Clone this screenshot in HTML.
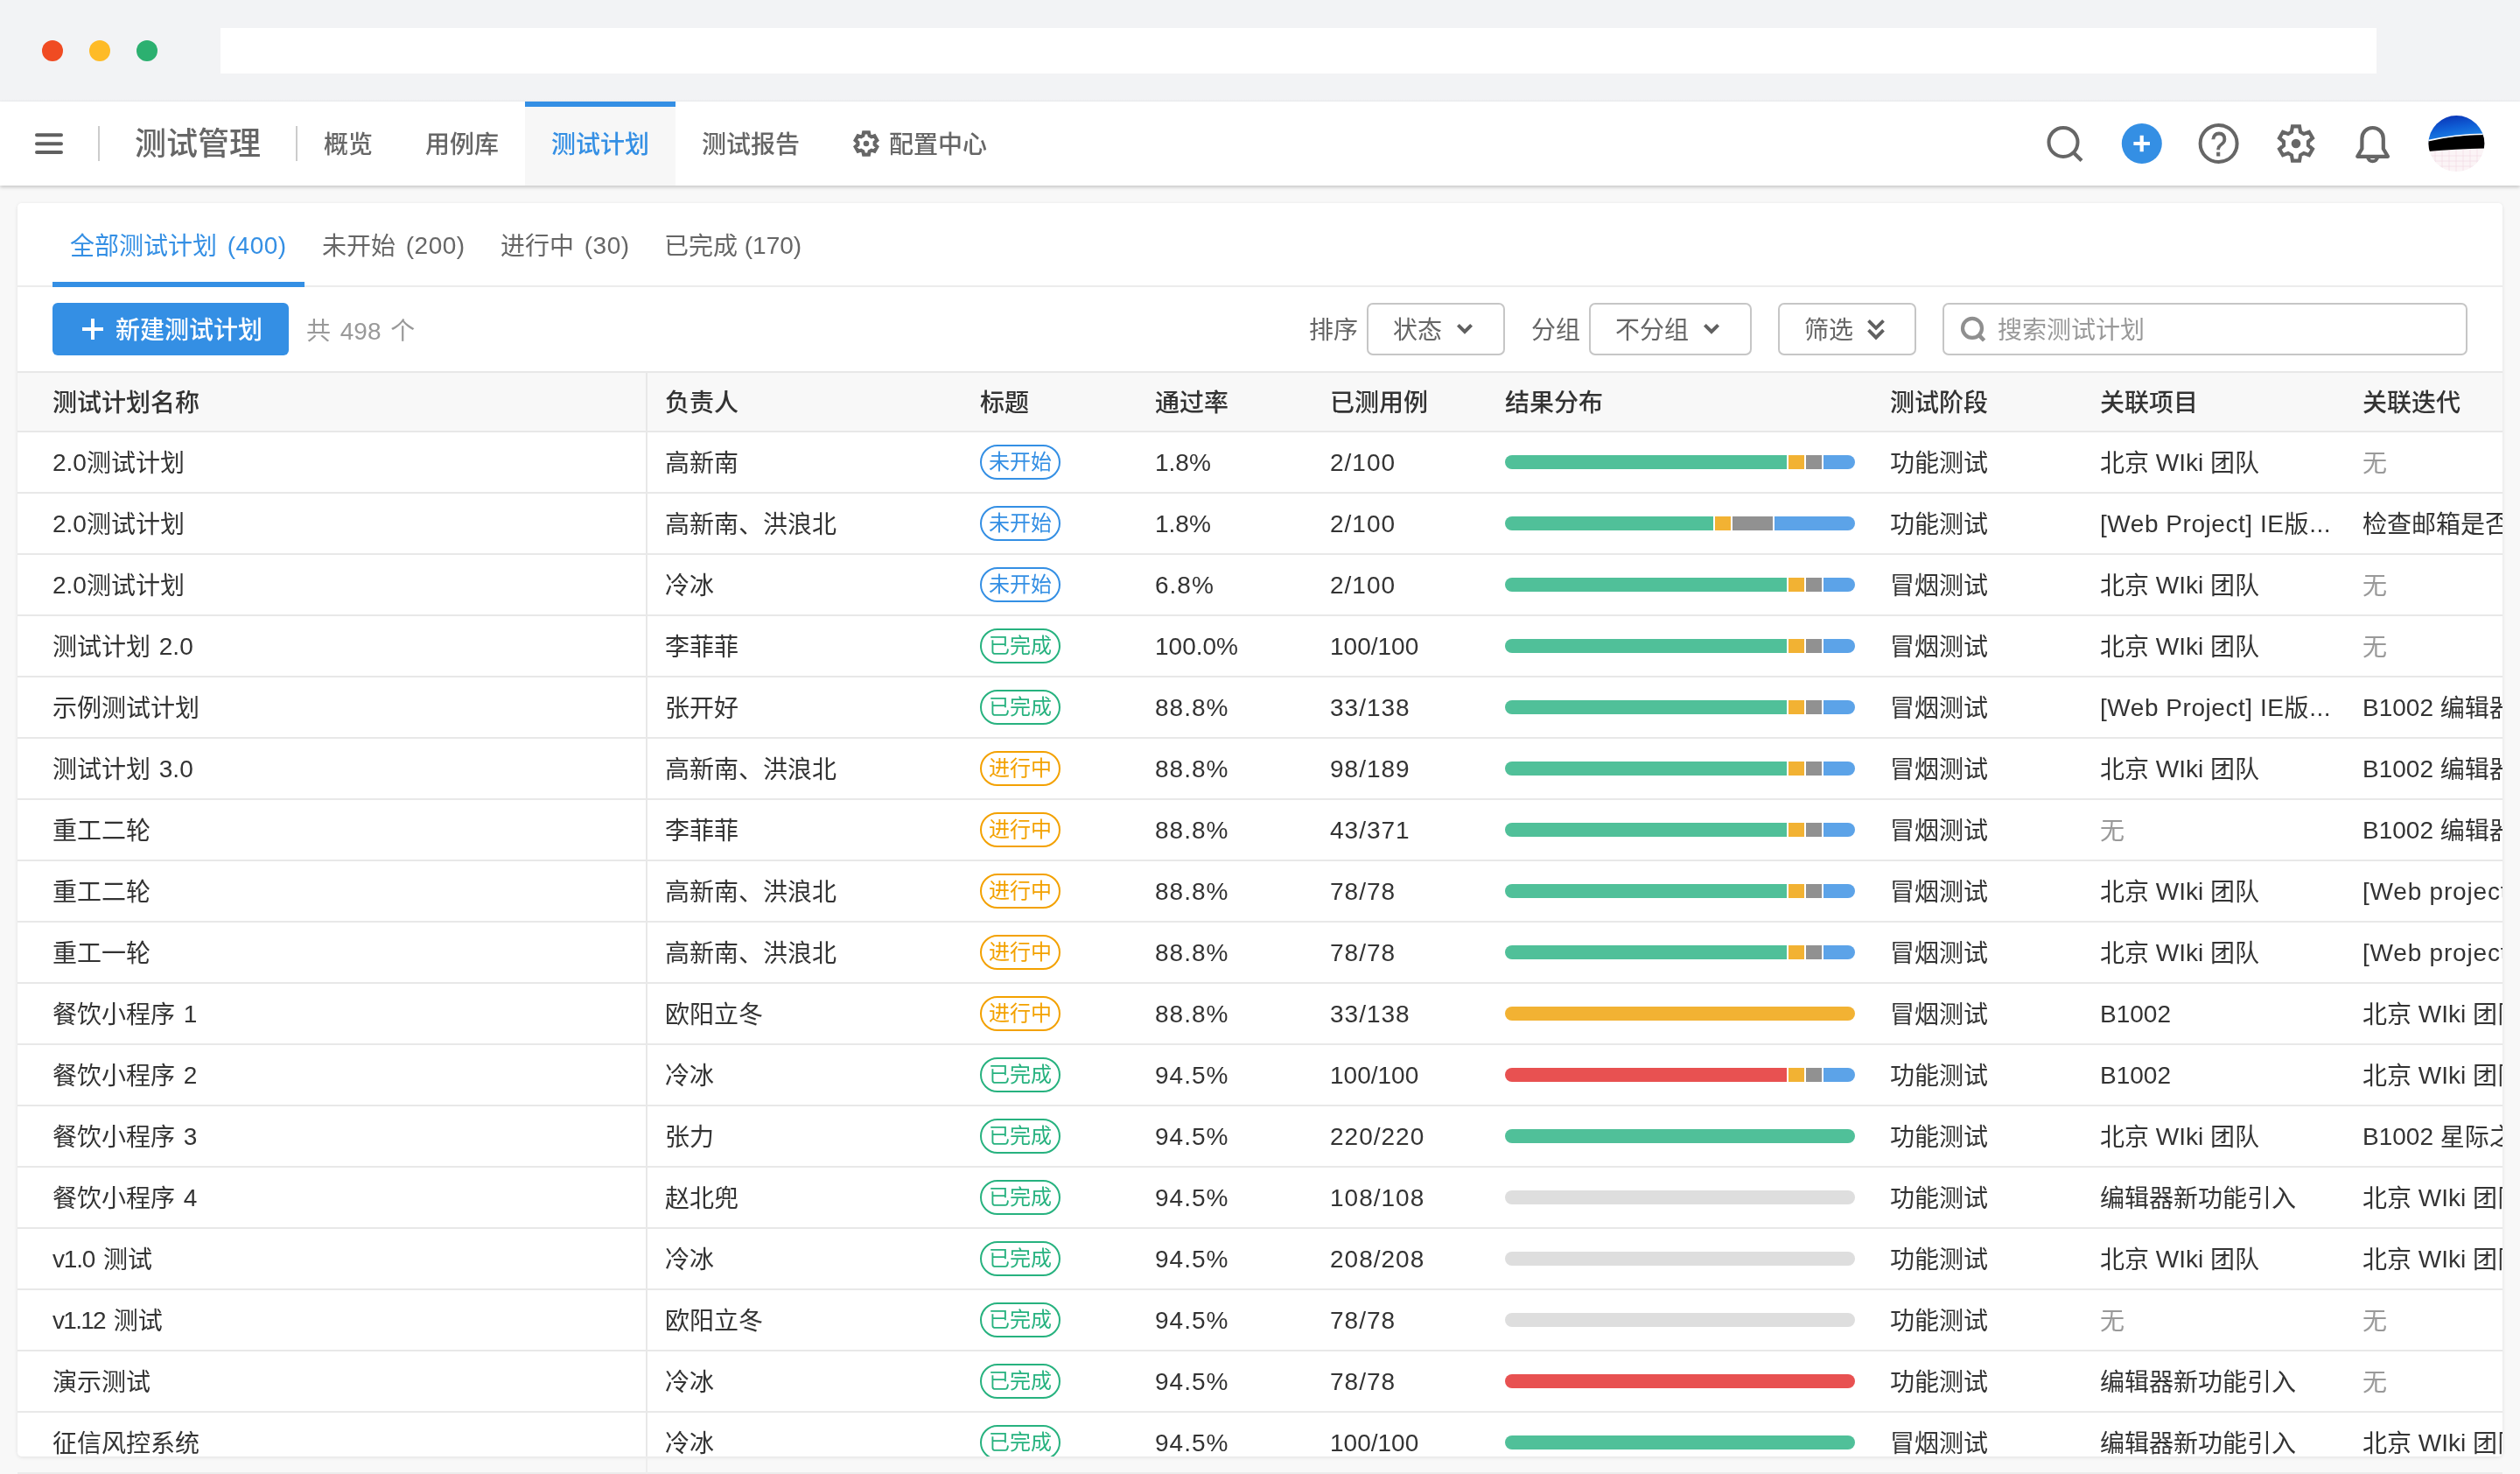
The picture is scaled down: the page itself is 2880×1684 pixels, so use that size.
<!DOCTYPE html>
<html lang="zh-CN">
<head>
<meta charset="utf-8">
<title>测试管理 - 测试计划</title>
<style>
*{box-sizing:border-box}
html,body{margin:0;padding:0}
body{-webkit-font-smoothing:antialiased;width:2880px;height:1684px;overflow:hidden;position:relative;background:#f8f8f8;
 font-family:"Liberation Sans","Noto Sans CJK SC",sans-serif;color:#333;font-size:28px;line-height:40px}
.abs{position:absolute}
/* browser chrome */
#chrome{position:absolute;left:0;top:0;width:2880px;height:116px;background:linear-gradient(#f2f3f5,#f2f3f5 114px,#eff0f2 115px,#eff0f2)}
#chrome .dot{position:absolute;top:46px;width:24px;height:24px;border-radius:50%}
#chrome .url{position:absolute;left:252px;top:32px;width:2464px;height:52px;background:#fff}
/* navbar */
#nav{position:absolute;left:0;top:116px;width:2880px;height:96px;background:#fff;box-shadow:0 2px 4px rgba(0,0,0,.2);color:#666}
#nav .sep{position:absolute;top:28px;width:2px;height:40px;background:#ccc}
#nav .title{font-weight:500;position:absolute;left:154px;top:0;height:96px;line-height:98px;font-size:36px;color:#666;white-space:nowrap}
#nav .tabs{position:absolute;left:340px;top:0;height:96px;display:flex}
#nav .tab{font-weight:500;height:96px;padding:0 30px;line-height:100px;font-size:28px;white-space:nowrap;position:relative;color:#666}
#nav .tab.on{background:#f7f7f7;color:#348fe4;border-top:6px solid #348fe4;line-height:88px}
#nav .tab svg{position:absolute;left:30px;top:33px}
#nav .tab.cfg{padding-left:72px}
#nav svg.ic{position:absolute}
/* card */
#card{position:absolute;left:20px;top:232px;width:2840px;height:1432px;background:#fff;border-radius:5px;overflow:hidden}
#cardsh{position:absolute;left:20px;top:232px;width:2840px;height:1432px;border-radius:5px;box-shadow:0 1px 4px rgba(0,0,0,.1)}
#ptabs{position:absolute;left:0;top:0;width:2840px;height:96px;border-bottom:2px solid #ececec}
#ptabs .pt{position:absolute;top:0;height:96px;line-height:100px;padding:0 20px;font-size:28px;color:#666;white-space:nowrap;word-spacing:4px}
#ptabs .pt b{font-weight:normal;letter-spacing:.5px;position:relative;top:-1px}
#ptabs .pt.on{color:#348fe4}
#ptabs .pt.on:after{content:"";position:absolute;left:0;right:0;bottom:0;height:6px;background:#348fe4}
#tool{position:absolute;left:0;top:96px;width:2840px;height:96px}
#newbtn{position:absolute;left:40px;top:18px;width:270px;height:60px;border-radius:6px;background:#348fe4;color:#fff;font-size:28px;font-weight:500;line-height:64px;padding-left:72px;white-space:nowrap}
#newbtn svg{position:absolute;left:34px;top:18px}
#total{position:absolute;left:330px;top:18px;line-height:66px;word-spacing:3px;color:#999;white-space:nowrap;font-size:28px}
.lbl{position:absolute;top:18px;line-height:64px;color:#666;white-space:nowrap}
.sel{position:absolute;top:18px;height:60px;border:2px solid #c6c6c6;border-radius:7px;line-height:60px;color:#666;padding-left:28px;white-space:nowrap;background:#fff}
.sel svg{position:absolute}
#search{position:absolute;left:2200px;top:18px;width:600px;height:60px;border:2px solid #c6c6c6;border-radius:7px;line-height:60px;color:#999;padding-left:61px;white-space:nowrap}
#search svg{position:absolute;left:16px;top:12px}
/* table */
#tbl{position:absolute;left:0;top:192px;width:2840px}
.th,.tr{display:flex;width:2840px;height:70px}
.th{border-top:2px solid #e8e8e8;border-bottom:2px solid #e8e8e8;background:#f8f8f8;font-weight:500;color:#333}
.tr{border-bottom:2px solid #e8e8e8}
  .td{height:68px;line-height:72px;white-space:nowrap;overflow:hidden;padding-left:20px;flex:none}
.th .td{height:66px;line-height:70px}
.c1{width:720px;padding-left:40px;border-right:2px solid #e8e8e8}
.c2{width:360px}.c3{width:200px}.c4{width:200px}.c5{width:200px}.c6{width:440px}.c7{width:240px}.c8{width:300px}.c9{width:180px}
.nil{color:#999}
.l{position:relative;top:-1px}
.tr .c1{word-spacing:2px}
.tr .c4,.tr .c5{line-height:69px}
.ls{letter-spacing:1px}
.tag{display:inline-block;vertical-align:top;margin-top:14px;width:92px;height:40px;border:2px solid;border-radius:20px;font-size:24px;line-height:36px;text-align:center}
.tb{color:#348fe4;border-color:#348fe4}
.tg{color:#27b27f;border-color:#27b27f}
.to{color:#f3a100;border-color:#f3a100}
.bar{position:relative;width:400px;height:16px;margin-top:26px;border-radius:8px;overflow:hidden;background:#fff}
.bar i{position:absolute;top:0;height:16px;display:block}
.sg{background:#50c099}.sy{background:#f2b233}.sn{background:#919191}.sb{background:#5ca3e8}.sr{background:#e85151}.se{background:#dedede}
#foot{position:absolute;left:20px;top:1682px;width:2840px;height:2px;background:#ebebeb}
#footv{position:absolute;left:738px;top:1664px;width:2px;height:20px;background:#ededed}
#card,#nav,#chrome{will-change:transform}
</style>
</head>
<body>
<div id="chrome">
 <div class="dot" style="left:48px;background:#f04b22"></div>
 <div class="dot" style="left:102px;background:#febb27"></div>
 <div class="dot" style="left:156px;background:#2cb070"></div>
 <div class="url"></div>
</div>

<div id="nav">
 <svg class="ic" style="left:36px;top:32px" width="40" height="32" viewBox="0 0 40 32"><path d="M6 6.3H34M6 16.2H34M6 26H34" stroke="#606060" stroke-width="4" stroke-linecap="round" fill="none"/></svg>
 <div class="sep" style="left:112px"></div>
 <div class="title">测试管理</div>
 <div class="sep" style="left:338px"></div>
 <div class="tabs">
  <div class="tab">概览</div>
  <div class="tab">用例库</div>
  <div class="tab on">测试计划</div>
  <div class="tab">测试报告</div>
  <div class="tab cfg"><svg style="left:30.6px" width="30" height="30" viewBox="0 0 30 30"><path d="M11.37 6.01 L12.09 2.38 L17.91 2.38 L18.63 6.01 L20.97 7.36 L24.47 6.17 L27.38 11.21 L24.61 13.65 L24.61 16.35 L27.38 18.79 L24.47 23.83 L20.97 22.64 L18.63 23.99 L17.91 27.62 L12.09 27.62 L11.37 23.99 L9.03 22.64 L5.53 23.83 L2.62 18.79 L5.39 16.35 L5.39 13.65 L2.62 11.21 L5.53 6.17 L9.03 7.36Z" fill="none" stroke="#666" stroke-width="4.1" stroke-linejoin="miter"/><circle cx="15" cy="15" r="3.3" fill="#666"/></svg>配置中心</div>
 </div>
 <!-- right icons: nav top = 116 -->
 <svg class="ic" style="left:2332px;top:20px" width="56" height="56" viewBox="0 0 56 56"><circle cx="26" cy="26.4" r="16.5" fill="none" stroke="#666" stroke-width="4"/><path d="M37.6 38.2L47 47.6" stroke="#666" stroke-width="4.2" fill="none"/></svg>
 <svg class="ic" style="left:2424px;top:24px" width="48" height="48" viewBox="0 0 48 48"><circle cx="23.8" cy="24" r="23" fill="#348fe4"/><path d="M14.4 24H33M23.7 14.8V33.2" stroke="#fff" stroke-width="4.2" fill="none"/></svg>
 <svg class="ic" style="left:2512px;top:24px" width="48" height="48" viewBox="0 0 48 48"><circle cx="23.6" cy="24" r="21" fill="none" stroke="#666" stroke-width="4"/><text x="0" y="38.5" transform="translate(23.7 0) scale(.88 1)" text-anchor="middle" font-family="Liberation Sans, sans-serif" font-size="38" fill="#666" stroke="#666" stroke-width="0.9">?</text></svg>
 <svg class="ic" style="left:2601.6px;top:26px" width="44" height="44" viewBox="0 0 44 44"><path d="M16.91 8.74 L18.01 2.40 L25.99 2.40 L27.09 8.74 L30.94 10.96 L36.98 8.75 L40.97 15.65 L36.03 19.78 L36.03 24.22 L40.97 28.35 L36.98 35.25 L30.94 33.04 L27.09 35.26 L25.99 41.60 L18.01 41.60 L16.91 35.26 L13.06 33.04 L7.02 35.25 L3.03 28.35 L7.97 24.22 L7.97 19.78 L3.03 15.65 L7.02 8.75 L13.06 10.96Z" fill="none" stroke="#666" stroke-width="4.2" stroke-linejoin="miter"/><circle cx="22" cy="22" r="5.3" fill="#666"/></svg>
 <svg class="ic" style="left:2688px;top:24px" width="48" height="48" viewBox="0 0 48 48"><path d="M6.2 38.8H41L35.8 30V18.2A12.2 12.2 0 0 0 11.4 18.2V30Z" fill="none" stroke="#666" stroke-width="4.2" stroke-linejoin="round"/><path d="M17.9 39.5A5.8 5.8 0 0 0 29.3 39.5" fill="none" stroke="#666" stroke-width="4"/></svg>
 <svg class="ic" style="left:2775px;top:15.6px" width="65" height="65" viewBox="0 0 65 65">
  <defs><clipPath id="av"><circle cx="32.4" cy="32.1" r="32"/></clipPath>
  <linearGradient id="sky" x1="0" y1="0" x2="0.35" y2="1"><stop offset="0" stop-color="#0a2cb0"/><stop offset="0.55" stop-color="#0f5fd6"/><stop offset="1" stop-color="#1f86e6"/></linearGradient></defs>
  <g clip-path="url(#av)">
   <rect x="0" y="0" width="65" height="65" fill="#fbf4f6"/>
   <path d="M0 0H65V22Q30 22 0 30Z" fill="url(#sky)"/>
   <path d="M0 29Q30 22 65 21.5V37.5Q30 38 0 41Z" fill="#000"/>
   <path d="M0 28.6Q30 21.6 65 21.2" stroke="#fff" stroke-width="1.6" fill="none"/>
   <path d="M8 41V65M16 40V65M24 39.5V65M32 39V65M40 38.6V65M48 38.3V65M56 38V65M0 46H65M0 52H65M0 58H65" stroke="#ecd3df" stroke-width="0.5" fill="none"/>
  </g>
 </svg>
</div>

<div id="cardsh"></div>
<div id="card">
 <div id="ptabs">
  <div class="pt on" style="left:40px;width:288px">全部测试计划 <b>(400)</b></div>
  <div class="pt" style="left:328px">未开始 <b>(200)</b></div>
  <div class="pt" style="left:532px">进行中 <b>(30)</b></div>
  <div class="pt" style="left:719px;word-spacing:0"><span>已完成 </span><b style="letter-spacing:0">(170)</b></div>
 </div>
 <div id="tool">
  <div id="newbtn"><svg width="24" height="24" viewBox="0 0 24 24"><path d="M0 12H24M12 0V24" stroke="#fff" stroke-width="4" fill="none"/></svg>新建测试计划</div>
  <div id="total">共 498 个</div>
  <div class="lbl" style="left:1476px">排序</div>
  <div class="sel" style="left:1542px;width:158px">状态<svg style="left:98px;top:20px" width="24" height="18" viewBox="0 0 24 18"><path d="M4.4 3.4L12 11L19.6 3.4" stroke="#606060" stroke-width="4" fill="none"/></svg></div>
  <div class="lbl" style="left:1730px">分组</div>
  <div class="sel" style="left:1796px;width:186px">不分组<svg style="left:125.6px;top:20px" width="24" height="18" viewBox="0 0 24 18"><path d="M4.4 3.4L12 11L19.6 3.4" stroke="#606060" stroke-width="4" fill="none"/></svg></div>
  <div class="sel" style="left:2012px;width:158px">筛选<svg style="left:96px;top:14px" width="28" height="30" viewBox="0 0 28 30"><path d="M5.5 4.4L14 12.9L22.5 4.4M5.5 15.2L14 23.7L22.5 15.2" stroke="#606060" stroke-width="3.8" fill="none"/></svg></div>
  <div id="search"><svg width="36" height="36" viewBox="0 0 36 36"><circle cx="16" cy="14.9" r="11" fill="none" stroke="#8f8f8f" stroke-width="4.2"/><path d="M23.4 22.6L29.6 29" stroke="#8f8f8f" stroke-width="4.6" fill="none"/></svg>搜索测试计划</div>
 </div>
 <div id="tbl">
  <div class="th"><div class="td c1">测试计划名称</div><div class="td c2">负责人</div><div class="td c3">标题</div><div class="td c4">通过率</div><div class="td c5">已测用例</div><div class="td c6">结果分布</div><div class="td c7">测试阶段</div><div class="td c8">关联项目</div><div class="td c9">关联迭代</div></div>
<div class="tr"><div class="td c1"><span class="l">2.0</span>测试计划</div><div class="td c2">高新南</div><div class="td c3"><span class="tag tb">未开始</span></div><div class="td c4">1.8%</div><div class="td c5"><span class="ls">2/100</span></div><div class="td c6"><div class="bar"><i class="sg" style="left:0px;width:322px"></i><i class="sy" style="left:324px;width:18px"></i><i class="sn" style="left:344px;width:18px"></i><i class="sb" style="left:364px;width:36px"></i></div></div><div class="td c7">功能测试</div><div class="td c8">北京 <span class="l">WIki</span> 团队</div><div class="td c9"><span class="nil">无</span></div></div>
<div class="tr"><div class="td c1"><span class="l">2.0</span>测试计划</div><div class="td c2">高新南、洪浪北</div><div class="td c3"><span class="tag tb">未开始</span></div><div class="td c4">1.8%</div><div class="td c5"><span class="ls">2/100</span></div><div class="td c6"><div class="bar"><i class="sg" style="left:0px;width:238px"></i><i class="sy" style="left:240px;width:18px"></i><i class="sn" style="left:260px;width:46px"></i><i class="sb" style="left:308px;width:92px"></i></div></div><div class="td c7">功能测试</div><div class="td c8"><span style="letter-spacing:.55px"><span class="l">[Web Project] IE</span>版<span class="l">...</span></span></div><div class="td c9">检查邮箱是否正常收发</div></div>
<div class="tr"><div class="td c1"><span class="l">2.0</span>测试计划</div><div class="td c2">冷冰</div><div class="td c3"><span class="tag tb">未开始</span></div><div class="td c4"><span class="ls">6.8%</span></div><div class="td c5"><span class="ls">2/100</span></div><div class="td c6"><div class="bar"><i class="sg" style="left:0px;width:322px"></i><i class="sy" style="left:324px;width:18px"></i><i class="sn" style="left:344px;width:18px"></i><i class="sb" style="left:364px;width:36px"></i></div></div><div class="td c7">冒烟测试</div><div class="td c8">北京 <span class="l">WIki</span> 团队</div><div class="td c9"><span class="nil">无</span></div></div>
<div class="tr"><div class="td c1">测试计划 <span class="l">2.0</span></div><div class="td c2">李菲菲</div><div class="td c3"><span class="tag tg">已完成</span></div><div class="td c4">100.0%</div><div class="td c5">100/100</div><div class="td c6"><div class="bar"><i class="sg" style="left:0px;width:322px"></i><i class="sy" style="left:324px;width:18px"></i><i class="sn" style="left:344px;width:18px"></i><i class="sb" style="left:364px;width:36px"></i></div></div><div class="td c7">冒烟测试</div><div class="td c8">北京 <span class="l">WIki</span> 团队</div><div class="td c9"><span class="nil">无</span></div></div>
<div class="tr"><div class="td c1">示例测试计划</div><div class="td c2">张开好</div><div class="td c3"><span class="tag tg">已完成</span></div><div class="td c4"><span class="ls">88.8%</span></div><div class="td c5"><span class="ls">33/138</span></div><div class="td c6"><div class="bar"><i class="sg" style="left:0px;width:322px"></i><i class="sy" style="left:324px;width:18px"></i><i class="sn" style="left:344px;width:18px"></i><i class="sb" style="left:364px;width:36px"></i></div></div><div class="td c7">冒烟测试</div><div class="td c8"><span style="letter-spacing:.55px"><span class="l">[Web Project] IE</span>版<span class="l">...</span></span></div><div class="td c9"><span class="l">B1002</span> 编辑器新功能</div></div>
<div class="tr"><div class="td c1">测试计划 <span class="l">3.0</span></div><div class="td c2">高新南、洪浪北</div><div class="td c3"><span class="tag to">进行中</span></div><div class="td c4"><span class="ls">88.8%</span></div><div class="td c5"><span class="ls">98/189</span></div><div class="td c6"><div class="bar"><i class="sg" style="left:0px;width:322px"></i><i class="sy" style="left:324px;width:18px"></i><i class="sn" style="left:344px;width:18px"></i><i class="sb" style="left:364px;width:36px"></i></div></div><div class="td c7">冒烟测试</div><div class="td c8">北京 <span class="l">WIki</span> 团队</div><div class="td c9"><span class="l">B1002</span> 编辑器新功能</div></div>
<div class="tr"><div class="td c1">重工二轮</div><div class="td c2">李菲菲</div><div class="td c3"><span class="tag to">进行中</span></div><div class="td c4"><span class="ls">88.8%</span></div><div class="td c5"><span class="ls">43/371</span></div><div class="td c6"><div class="bar"><i class="sg" style="left:0px;width:322px"></i><i class="sy" style="left:324px;width:18px"></i><i class="sn" style="left:344px;width:18px"></i><i class="sb" style="left:364px;width:36px"></i></div></div><div class="td c7">冒烟测试</div><div class="td c8"><span class="nil">无</span></div><div class="td c9"><span class="l">B1002</span> 编辑器新功能</div></div>
<div class="tr"><div class="td c1">重工二轮</div><div class="td c2">高新南、洪浪北</div><div class="td c3"><span class="tag to">进行中</span></div><div class="td c4"><span class="ls">88.8%</span></div><div class="td c5"><span class="ls">78/78</span></div><div class="td c6"><div class="bar"><i class="sg" style="left:0px;width:322px"></i><i class="sy" style="left:324px;width:18px"></i><i class="sn" style="left:344px;width:18px"></i><i class="sb" style="left:364px;width:36px"></i></div></div><div class="td c7">冒烟测试</div><div class="td c8">北京 <span class="l">WIki</span> 团队</div><div class="td c9"><span style="letter-spacing:.8px"><span class="l">[Web project]</span> 迭代</span></div></div>
<div class="tr"><div class="td c1">重工一轮</div><div class="td c2">高新南、洪浪北</div><div class="td c3"><span class="tag to">进行中</span></div><div class="td c4"><span class="ls">88.8%</span></div><div class="td c5"><span class="ls">78/78</span></div><div class="td c6"><div class="bar"><i class="sg" style="left:0px;width:322px"></i><i class="sy" style="left:324px;width:18px"></i><i class="sn" style="left:344px;width:18px"></i><i class="sb" style="left:364px;width:36px"></i></div></div><div class="td c7">冒烟测试</div><div class="td c8">北京 <span class="l">WIki</span> 团队</div><div class="td c9"><span style="letter-spacing:.8px"><span class="l">[Web project]</span> 迭代</span></div></div>
<div class="tr"><div class="td c1">餐饮小程序 <span class="l">1</span></div><div class="td c2">欧阳立冬</div><div class="td c3"><span class="tag to">进行中</span></div><div class="td c4"><span class="ls">88.8%</span></div><div class="td c5"><span class="ls">33/138</span></div><div class="td c6"><div class="bar"><i class="sy" style="left:0px;width:400px"></i></div></div><div class="td c7">冒烟测试</div><div class="td c8"><span class="l">B1002</span></div><div class="td c9">北京 <span class="l">WIki</span> 团队</div></div>
<div class="tr"><div class="td c1">餐饮小程序 <span class="l">2</span></div><div class="td c2">冷冰</div><div class="td c3"><span class="tag tg">已完成</span></div><div class="td c4"><span class="ls">94.5%</span></div><div class="td c5">100/100</div><div class="td c6"><div class="bar"><i class="sr" style="left:0px;width:322px"></i><i class="sy" style="left:324px;width:18px"></i><i class="sn" style="left:344px;width:18px"></i><i class="sb" style="left:364px;width:36px"></i></div></div><div class="td c7">功能测试</div><div class="td c8"><span class="l">B1002</span></div><div class="td c9">北京 <span class="l">WIki</span> 团队</div></div>
<div class="tr"><div class="td c1">餐饮小程序 <span class="l">3</span></div><div class="td c2">张力</div><div class="td c3"><span class="tag tg">已完成</span></div><div class="td c4"><span class="ls">94.5%</span></div><div class="td c5"><span class="ls">220/220</span></div><div class="td c6"><div class="bar"><i class="sg" style="left:0px;width:400px"></i></div></div><div class="td c7">功能测试</div><div class="td c8">北京 <span class="l">WIki</span> 团队</div><div class="td c9"><span class="l">B1002</span> 星际之门</div></div>
<div class="tr"><div class="td c1">餐饮小程序 <span class="l">4</span></div><div class="td c2">赵北兜</div><div class="td c3"><span class="tag tg">已完成</span></div><div class="td c4"><span class="ls">94.5%</span></div><div class="td c5"><span class="ls">108/108</span></div><div class="td c6"><div class="bar"><i class="se" style="left:0px;width:400px"></i></div></div><div class="td c7">功能测试</div><div class="td c8">编辑器新功能引入</div><div class="td c9">北京 <span class="l">WIki</span> 团队</div></div>
<div class="tr"><div class="td c1"><span style="letter-spacing:-1.2px"><span class="l">v1.0</span></span> 测试</div><div class="td c2">冷冰</div><div class="td c3"><span class="tag tg">已完成</span></div><div class="td c4"><span class="ls">94.5%</span></div><div class="td c5"><span class="ls">208/208</span></div><div class="td c6"><div class="bar"><i class="se" style="left:0px;width:400px"></i></div></div><div class="td c7">功能测试</div><div class="td c8">北京 <span class="l">WIki</span> 团队</div><div class="td c9">北京 <span class="l">WIki</span> 团队</div></div>
<div class="tr"><div class="td c1"><span style="letter-spacing:-1.7px"><span class="l">v1.12</span></span> 测试</div><div class="td c2">欧阳立冬</div><div class="td c3"><span class="tag tg">已完成</span></div><div class="td c4"><span class="ls">94.5%</span></div><div class="td c5"><span class="ls">78/78</span></div><div class="td c6"><div class="bar"><i class="se" style="left:0px;width:400px"></i></div></div><div class="td c7">功能测试</div><div class="td c8"><span class="nil">无</span></div><div class="td c9"><span class="nil">无</span></div></div>
<div class="tr"><div class="td c1">演示测试</div><div class="td c2">冷冰</div><div class="td c3"><span class="tag tg">已完成</span></div><div class="td c4"><span class="ls">94.5%</span></div><div class="td c5"><span class="ls">78/78</span></div><div class="td c6"><div class="bar"><i class="sr" style="left:0px;width:400px"></i></div></div><div class="td c7">功能测试</div><div class="td c8">编辑器新功能引入</div><div class="td c9"><span class="nil">无</span></div></div>
<div class="tr"><div class="td c1">征信风控系统</div><div class="td c2">冷冰</div><div class="td c3"><span class="tag tg">已完成</span></div><div class="td c4"><span class="ls">94.5%</span></div><div class="td c5">100/100</div><div class="td c6"><div class="bar"><i class="sg" style="left:0px;width:400px"></i></div></div><div class="td c7">冒烟测试</div><div class="td c8">编辑器新功能引入</div><div class="td c9">北京 <span class="l">WIki</span> 团队</div></div>
 </div>
</div>
<div id="foot"></div>
<div id="footv"></div>
</body>
</html>
